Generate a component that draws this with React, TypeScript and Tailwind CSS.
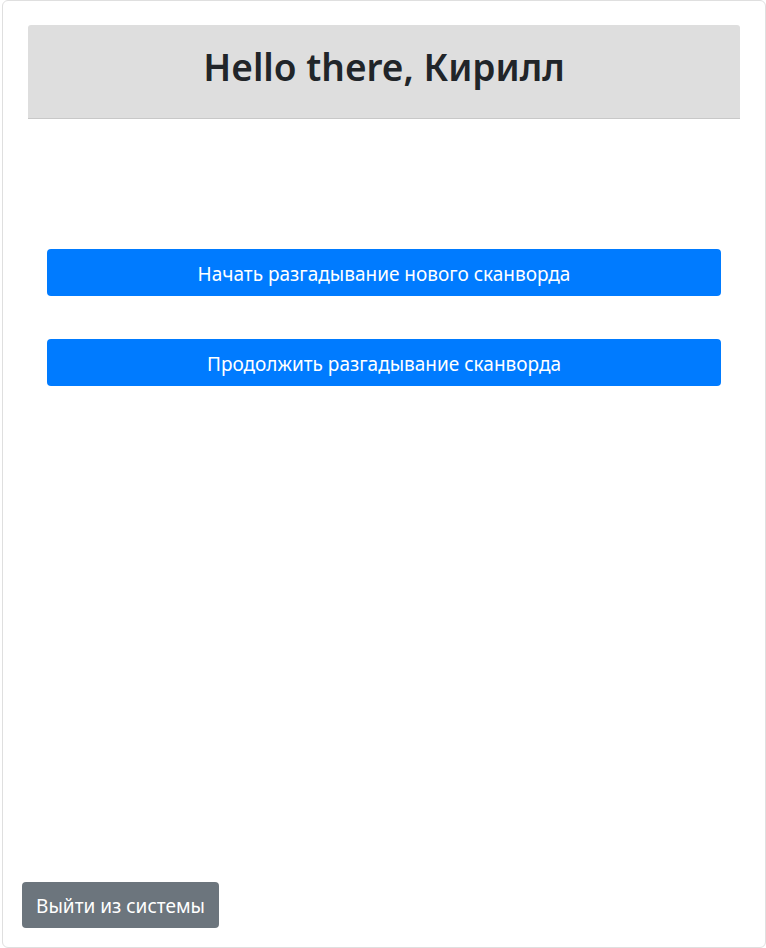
import React from 'react';

const font = {fontFamily: '"Noto Sans", "Open Sans", sans-serif'};

const App = () => {
    return (
        <div className="w-[766px] h-[948px] bg-white" style={font}>
            <div className="ml-[2px] w-[764px] h-[948px] border border-[#dfdfdf] rounded-md flex flex-col">
                <div className="mx-[25px] mt-[24px] h-[94px] bg-[#dedede] rounded-t-[3px] border-b border-[#c8c8c8] flex items-center justify-center">
                    <h1 className="text-[37px] font-semibold text-[#212529] leading-none pb-[10px]">
                        Hello there, Кирилл
                    </h1>
                </div>
                <div className="mx-[44px] mt-[130px] flex flex-col gap-[43px]">
                    {[
                        'Начать разгадывание нового сканворда',
                        'Продолжить разгадывание сканворда',
                    ].map((title, i) => (
                        <button
                            key={`btn-${i}`}
                            className="h-[47px] w-full rounded bg-[#007bff] text-white text-[19px] leading-none pt-[3px]"
                        >
                            {title}
                        </button>
                    ))}
                </div>
                <div className="mt-auto mb-[19px] ml-[19px]">
                    <button className="h-[46px] w-[197px] rounded bg-[#6c757d] text-white text-[19px] leading-none pt-[2px]">
                        Выйти из системы
                    </button>
                </div>
            </div>
        </div>
    );
};

export default App;
